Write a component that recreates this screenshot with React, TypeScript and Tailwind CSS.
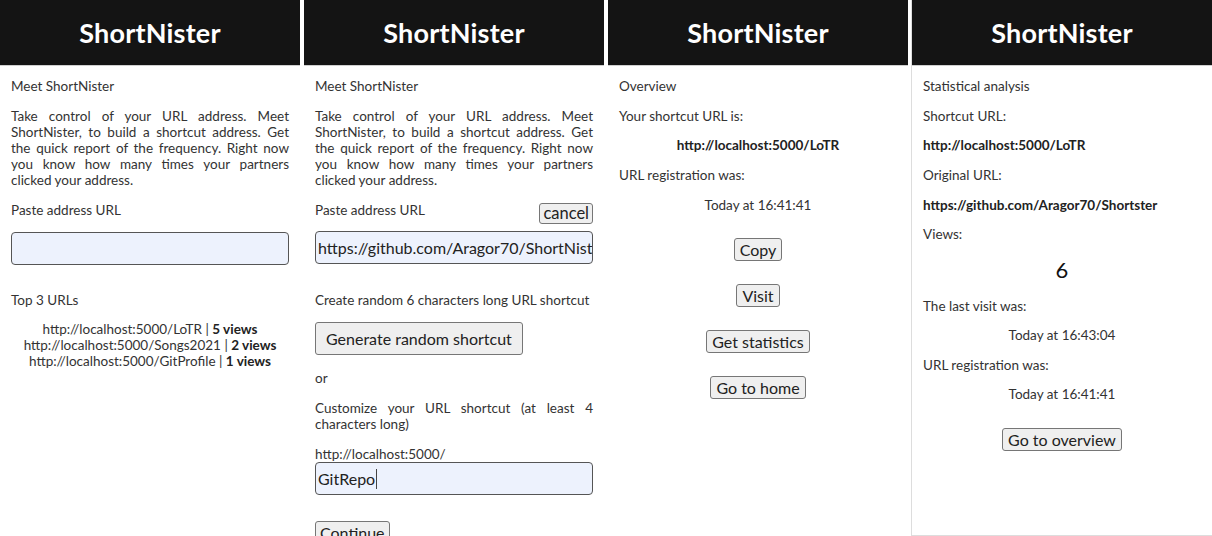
const font = { fontFamily: "Lato, 'Open Sans', sans-serif" }

function Header() {
  return (
    <header className="h-[66px] bg-[#141414] border-b border-[#cfcfcf] flex items-center justify-center">
      <h1 className="text-white font-bold text-[27px] leading-none tracking-[0.2px]">ShortNister</h1>
    </header>
  )
}

function Btn({ children, className = "text-[16px] leading-[21px] px-[5px]" }: { children: React.ReactNode; className?: string }) {
  return (
    <button className={`bg-[#efefef] border border-[#767676] rounded-[3px] text-[#222] ${className}`}>
      {children}
    </button>
  )
}

function Field({ value, caret }: { value?: string; caret?: boolean }) {
  return (
    <div className="h-[33px] w-[278px] bg-[#edf2fd] border border-[#555] rounded-[4px] flex items-center px-[2px] overflow-hidden whitespace-nowrap text-[16px] text-[#222]">
      {value}
      {caret && <span className="inline-block w-px h-[20px] bg-[#444] ml-px" />}
    </div>
  )
}

const body = "px-[11px] text-[13.5px] leading-4 text-[#333]"

function HomePanel() {
  return (
    <div className="w-[300px]">
      <Header />
      <div className={body}>
        <p className="mt-3">Meet ShortNister</p>
        <p className="mt-[14px] text-justify">
          Take control of your URL address. Meet ShortNister, to build a shortcut address. Get the quick report of the frequency. Right now you know how many times your partners clicked your address.
        </p>
        <p className="mt-[14px]">Paste address URL</p>
        <div className="mt-[14px]">
          <Field />
        </div>
        <p className="mt-[27px]">Top 3 URLs</p>
        <ul className="mt-[13px] text-center">
          <li>http://localhost:5000/LoTR | <b className="text-[#222]">5 views</b></li>
          <li>http://localhost:5000/Songs2021 | <b className="text-[#222]">2 views</b></li>
          <li>http://localhost:5000/GitProfile | <b className="text-[#222]">1 views</b></li>
        </ul>
      </div>
    </div>
  )
}

function CreatePanel() {
  return (
    <div className="w-[300px] h-[536px] overflow-hidden">
      <Header />
      <div className={body}>
        <p className="mt-3">Meet ShortNister</p>
        <p className="mt-[14px] text-justify">
          Take control of your URL address. Meet ShortNister, to build a shortcut address. Get the quick report of the frequency. Right now you know how many times your partners clicked your address.
        </p>
        <div className="mt-[14px] flex items-start justify-between w-[278px] h-[22px]">
          <p>Paste address URL</p>
          <Btn className="text-[16.5px] leading-[19px] px-[3px] mt-px">cancel</Btn>
        </div>
        <div className="mt-[7px]">
          <Field value="https://github.com/Aragor70/ShortNister" />
        </div>
        <p className="mt-[28px]">Create random 6 characters long URL shortcut</p>
        <Btn className="mt-[14px] h-[33px] px-[10px] text-[16px] leading-[21px]">Generate random shortcut</Btn>
        <p className="mt-[15px]">or</p>
        <p className="mt-[14px] text-justify w-[278px]">Customize your URL shortcut (at least 4 characters long)</p>
        <p className="mt-[14px]">http://localhost:5000/</p>
        <Field value="GitRepo" caret />
        <Btn className="mt-[26px] px-[4px] text-[16px] leading-[21px]">Continue</Btn>
      </div>
    </div>
  )
}

function OverviewPanel() {
  return (
    <div className="w-[300px]">
      <Header />
      <div className={body}>
        <p className="mt-3">Overview</p>
        <p className="mt-[14px]">Your shortcut URL is:</p>
        <p className="mt-[13px] text-center font-bold text-[#222]">http://localhost:5000/LoTR</p>
        <p className="mt-[14px]">URL registration was:</p>
        <p className="mt-[14px] text-center">Today at 16:41:41</p>
        <div className="mt-[25px] flex flex-col items-center gap-[23px]">
          <Btn>Copy</Btn>
          <Btn>Visit</Btn>
          <Btn>Get statistics</Btn>
          <Btn>Go to home</Btn>
        </div>
      </div>
    </div>
  )
}

function StatsPanel() {
  return (
    <div className="w-[301px] -ml-px h-[536px] border-l border-b border-[#dddddd]">
      <Header />
      <div className={body}>
        <p className="mt-3">Statistical analysis</p>
        <p className="mt-[14px]">Shortcut URL:</p>
        <p className="mt-[13px] font-bold text-[#222]">http://localhost:5000/LoTR</p>
        <p className="mt-[14px]">Original URL:</p>
        <p className="mt-[14px] font-bold text-[#222]">https://github.com/Aragor70/Shortster</p>
        <p className="mt-[13px]">Views:</p>
        <p className="mt-[15px] text-center text-[22px] leading-[26px] text-[#111]">6</p>
        <p className="mt-[15px]">The last visit was:</p>
        <p className="mt-[13px] text-center">Today at 16:43:04</p>
        <p className="mt-[14px]">URL registration was:</p>
        <p className="mt-[13px] text-center">Today at 16:41:41</p>
        <div className="mt-[26px] flex justify-center">
          <Btn>Go to overview</Btn>
        </div>
      </div>
    </div>
  )
}

export default function App() {
  return (
    <div style={font} className="w-[1212px] h-[536px] bg-white flex gap-[4px] overflow-hidden">
      <HomePanel />
      <CreatePanel />
      <OverviewPanel />
      <StatsPanel />
    </div>
  )
}
